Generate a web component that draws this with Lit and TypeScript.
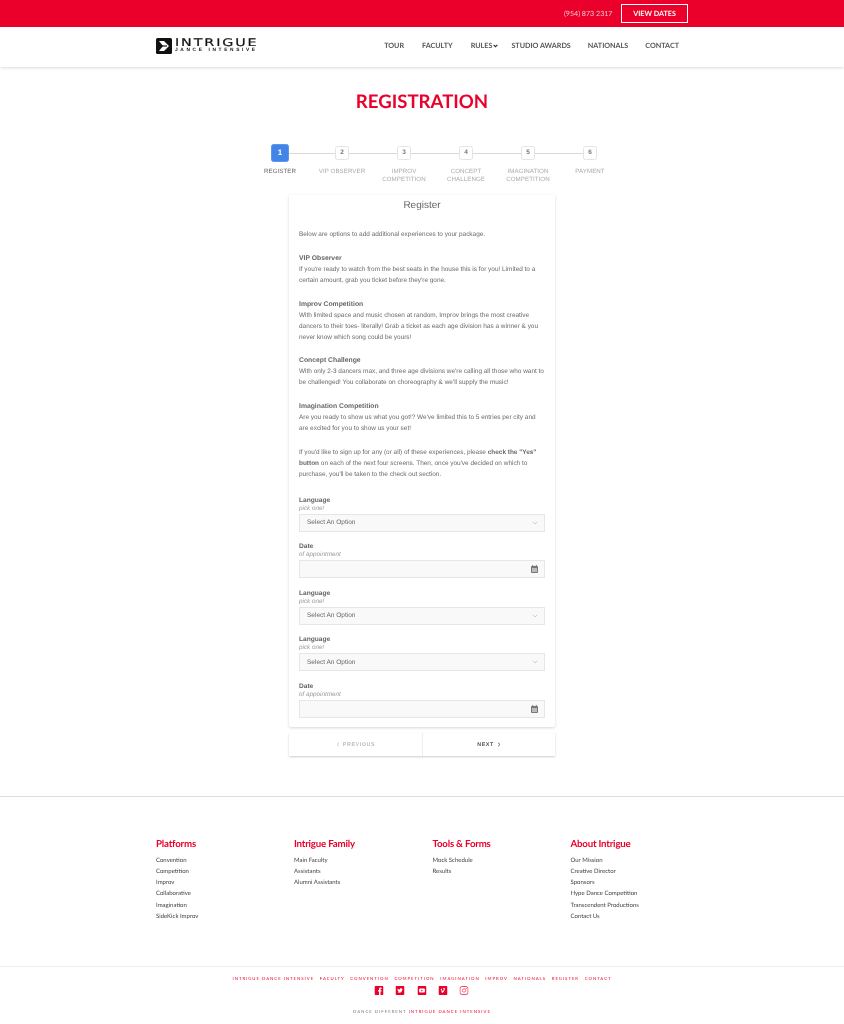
import { LitElement, html, css } from "lit";
import { customElement } from "lit/decorators.js";

const red = "#ea002a";

@customElement("app-root")
export class AppRoot extends LitElement {
  static styles = css`
    :host { display: block; width: 844px; background: #fff; font-family: "Liberation Sans", Arial, sans-serif; color: #666; overflow: hidden; text-rendering: geometricPrecision; filter: blur(.4px); }
    .topbar { height: 27px; background: #ea002a; display: flex; justify-content: flex-end; align-items: center; padding-right: 156px; gap: 8.5px; box-sizing: border-box; }
    .phone { font: 400 7.1px Lato, sans-serif; color: #f7c4cd; }
    .dates { width: 67px; height: 19px; box-sizing: border-box; border: 1px solid #fff; color: #fff; font: 700 7.2px/17px Lato, sans-serif; text-align: center; }
    .nav { height: 40px; display: flex; align-items: center; padding: 0 165px 3px 156px; box-sizing: border-box; box-shadow: 0 1px 3px rgba(0,0,0,.14); justify-content: space-between; }
    .logo { display: flex; gap: 3px; align-items: center; color: #111; }
    .logo svg { display: block; }
    .logotext { display: flex; flex-direction: column; width: 81px; }
    .l1 { font: 400 10.5px/10px "DejaVu Sans", sans-serif; letter-spacing: 1.4px; transform: scaleX(1.36); transform-origin: left; white-space: nowrap; -webkit-text-stroke: .2px #111; }
    .l2 { font: 700 4.8px/6px "Liberation Sans", sans-serif; letter-spacing: 2.65px; white-space: nowrap; }
    .links { display: flex; align-items: center; font: 700 7.2px Lato, sans-serif; color: #555; }
    .links span { display: flex; align-items: center; gap: 1px; }
    .l-tour { margin-right: 18px; } .l-fac { margin-right: 18px; } .l-rules { margin-right: 13px; } .l-stu { margin-right: 17px; } .l-nat { margin-right: 17px; }
    h1 { margin: 24px 0 0; height: 21px; text-align: center; font: 700 18.6px/21px Lato, sans-serif; color: #ea002a; }
    .steps { margin: 33px 0 0 249px; width: 372px; display: grid; grid-template-columns: repeat(6, 62px); }
    .step { display: flex; flex-direction: column; align-items: center; position: relative; height: 50px; }
    .step:not(:last-child)::after { content: ""; position: absolute; left: 31px; top: 8px; width: 62px; height: 1px; background: #d8d8d8; }
    .num { z-index: 1; margin-top: 1px; width: 14px; height: 14px; box-sizing: border-box; background: #fff; border: 1px solid #e4e4e4; border-radius: 2.5px; font: 700 6.5px/12px "Liberation Sans", sans-serif; color: #777; text-align: center; }
    .num.on { width: 18px; height: 18px; margin-top: -1px; background: #4285e9; border-color: #5d96ec; color: #fff; line-height: 16px; font-size: 8px; }
    .slabel { margin-top: 7.5px; text-align: center; font: 400 6.2px/8px "Liberation Sans", sans-serif; color: #aaa; letter-spacing: .05px; white-space: nowrap; }
    .on + .slabel { margin-top: 6px; color: #666; }
    .card { margin: 0 0 0 289px; width: 266px; box-sizing: border-box; padding: 0 10px 9px; box-shadow: 0 1px 3px rgba(0,0,0,.16); border-radius: 0 0 2px 2px; height: 532px; }
    h2 { margin: 0; padding-top: 3.5px; height: 30px; box-sizing: border-box; text-align: center; font: 400 10px/14px "Liberation Sans", sans-serif; color: #666; }
    .card p { margin: 0; font: 400 6.45px/11.2px "Liberation Sans", sans-serif; color: #6a6a6a; }
    .card .intro { padding-top: 3.5px; height: 24px; box-sizing: content-box; }
    .card h3 { margin: 0; font: 700 6.8px/11.2px "Liberation Sans", sans-serif; color: #666; }
    .s1 { height: 46px; } .s2 { height: 56px; } .s3 { height: 46px; } .s4 { height: 46px; }
    .card .note { height: 50px; }
    .field { height: 46.5px; box-sizing: border-box; }
    .flabel { font: 700 6.6px/8px "Liberation Sans", sans-serif; color: #666; }
    .fhint { font: italic 400 6.3px/8px "Liberation Sans", sans-serif; color: #999; }
    .input { height: 18px; box-sizing: border-box; border: 1px solid #e6e6e6; background: #f9f9f9; display: flex; align-items: center; justify-content: space-between; padding: 0 6px 0 7px; font: 400 6.5px "Liberation Sans", sans-serif; color: #666; margin-top: 1px; }
    .pager { margin: 6px 0 0 289px; width: 266px; height: 23px; display: grid; grid-template-columns: 134px 132px; box-shadow: 0 1px 2px rgba(0,0,0,.2); }
    .pager div { display: flex; align-items: center; justify-content: center; gap: 3px; font: 700 5.4px "Liberation Sans", sans-serif; letter-spacing: .55px; color: #555; }
    .pager .prev { color: #bbb; border-right: 1px solid #eee; }
    .foot { margin-top: 40px; border-top: 1px solid #ddd; padding: 40px 0 0 156px; height: 128px; box-sizing: border-box; display: grid; grid-template-columns: 138px 138.5px 138px 130px; }
    .foot h4 { margin: 0 0 3.5px; font: 700 9.7px/14px Lato, sans-serif; color: #ea002a; letter-spacing: -.2px; }
    .foot a { display: block; font: 400 6px/11.3px Lato, sans-serif; color: #444; }
    .bottom { margin-top: 42px; border-top: 1px solid #eee; height: 58px; padding-top: 8.5px; box-sizing: border-box; text-align: center; }
    .blinks { font: 400 4.3px/6px Lato, sans-serif; letter-spacing: .97px; color: #ea002a; display: flex; justify-content: center; gap: 5.7px; }
    .social { display: flex; justify-content: center; gap: 12.3px; margin-top: 4px; transform: translateX(-.5px); }
    .social svg { display: block; }
    .copy { margin-top: 14px; font: 400 4.3px/6px Lato, sans-serif; letter-spacing: 1px; color: #777; }
    .copy b { font-weight: 400; color: #ea002a; }
  `;

  chevron() {
    return html`<svg width="6" height="4" viewBox="0 0 6 4"><path d="M.8.8L3 3 5.2.8" fill="none" stroke="#bbb" stroke-width=".7"/></svg>`;
  }
  calendar() {
    return html`<svg width="7" height="8" viewBox="0 0 7 8"><rect x="0" y="1" width="7" height="7" rx="1" fill="#777"/><rect x="1" y="3" width="5" height="4" fill="#bbb"/><rect x="1.2" y="0" width="1" height="2" fill="#777"/><rect x="4.8" y="0" width="1" height="2" fill="#777"/></svg>`;
  }
  select() {
    return html`<div class="field"><div class="flabel">Language</div><div class="fhint">pick one!</div><div class="input"><span>Select An Option</span>${this.chevron()}</div></div>`;
  }
  date() {
    return html`<div class="field"><div class="flabel">Date</div><div class="fhint">of appointment</div><div class="input"><span></span>${this.calendar()}</div></div>`;
  }

  render() {
    const steps = [["REGISTER"],["VIP OBSERVER"],["IMPROV","COMPETITION"],["CONCEPT","CHALLENGE"],["IMAGINATION","COMPETITION"],["PAYMENT"]];
    const cols: [string, string[]][] = [
      ["Platforms", ["Convention","Competition","Improv","Collaborative","Imagination","SideKick Improv"]],
      ["Intrigue Family", ["Main Faculty","Assistants","Alumni Assistants"]],
      ["Tools & Forms", ["Mock Schedule","Results"]],
      ["About Intrigue", ["Our Mission","Creative Director","Sponsors","Hype Dance Competition","Transcendent Productions","Contact Us"]],
    ];
    const blinks = ["INTRIGUE DANCE INTENSIVE","FACULTY","CONVENTION","COMPETITION","IMAGINATION","IMPROV","NATIONALS","REGISTER","CONTACT"];
    return html`
      <div class="topbar"><span class="phone">(954) 873 2317</span><span class="dates">VIEW DATES</span></div>
      <div class="nav">
        <div class="logo">
          <svg width="16" height="16" viewBox="0 0 16 16"><rect width="16" height="16" rx="1.5" fill="#111"/><path d="M3 3h5l5 5-5 5H3l4-5z" fill="#fff"/><path d="M3 8h8" stroke="#111" stroke-width="1.2"/></svg>
          <div class="logotext"><span class="l1">INTRIGUE</span><span class="l2">JANCE INTENSIVE</span></div>
        </div>
        <div class="links">
          <span class="l-tour">TOUR</span><span class="l-fac">FACULTY</span>
          <span class="l-rules">RULES <svg width="5" height="4" viewBox="0 0 5 4"><path d="M.6.8l1.9 1.9L4.4.8" fill="none" stroke="#333" stroke-width="1.2"/></svg></span>
          <span class="l-stu">STUDIO AWARDS</span><span class="l-nat">NATIONALS</span><span>CONTACT</span>
        </div>
      </div>
      <h1>REGISTRATION</h1>
      <div class="steps">
        ${steps.map((s, i) => html`<div class="step"><div class="num ${i === 0 ? "on" : ""}">${i + 1}</div><div class="slabel">${s.map((t, j) => html`${j ? html`<br>` : ""}${t}`)}</div></div>`)}
      </div>
      <div class="card">
        <h2>Register</h2>
        <p class="intro">Below are options to add additional experiences to your package.</p>
        <div class="s1"><h3>VIP Observer</h3><p>If you're ready to watch from the best seats in the house this is for you! Limited to a certain amount, grab you ticket before they're gone.</p></div>
        <div class="s2"><h3>Improv Competition</h3><p>With limited space and music chosen at random, Improv brings the most creative dancers to their toes- literally! Grab a ticket as each age division has a winner &amp; you never know which song could be yours!</p></div>
        <div class="s3"><h3>Concept Challenge</h3><p>With only 2-3 dancers max, and three age divisions we're calling all those who want to be challenged! You collaborate on choreography &amp; we'll supply the music!</p></div>
        <div class="s4"><h3>Imagination Competition</h3><p>Are you ready to show us what you got!? We've limited this to 5 entries per city and are excited for you to show us your set!</p></div>
        <p class="note">If you'd like to sign up for any (or all) of these experiences, please <b>check the "Yes" button</b> on each of the next four screens. Then, once you've decided on which to purchase, you'll be taken to the check out section.</p>
        ${this.select()}${this.date()}${this.select()}${this.select()}${this.date()}
      </div>
      <div class="pager">
        <div class="prev"><svg width="4" height="5" viewBox="0 0 4 5"><path d="M3 .7L1 2.5 3 4.3" fill="none" stroke="#bbb" stroke-width=".7"/></svg>PREVIOUS</div>
        <div>NEXT<svg width="4" height="5" viewBox="0 0 4 5"><path d="M1 .7L3 2.5 1 4.3" fill="none" stroke="#555" stroke-width=".8"/></svg></div>
      </div>
      <div class="foot">
        ${cols.map(([t, ls]) => html`<div><h4>${t}</h4>${ls.map((l) => html`<a>${l}</a>`)}</div>`)}
      </div>
      <div class="bottom">
        <div class="blinks">${blinks.map((b) => html`<span>${b}</span>`)}</div>
        <div class="social">
          <svg width="9" height="9" viewBox="0 0 9 9"><rect width="9" height="9" rx="1" fill="${red}"/><path d="M6 9V5.5h1V4.2H6V3.5c0-.4.2-.6.6-.6H7V1.6H6C5 1.6 4.5 2.3 4.5 3.2v1h-1v1.3h1V9z" fill="#fff"/></svg>
          <svg width="9" height="9" viewBox="0 0 9 9"><rect width="9" height="9" rx="1" fill="${red}"/><path d="M1.6 6.4c2.4 1.2 5-.2 5.2-3l.6-.7-.8.2-.7-.6c-.8-.3-1.6.3-1.5 1.2-1 0-1.8-.5-2.3-1.1-.3.7 0 1.3.4 1.7l-.5-.1c0 .6.4 1 1 1.2h-.5c.2.4.5.6 1 .7-.5.4-1.2.5-1.9.5z" fill="#fff"/></svg>
          <svg width="9" height="9" viewBox="0 0 9 9"><rect width="9" height="9" rx="1" fill="${red}"/><rect x="1.6" y="2.6" width="5.8" height="3.8" rx="1" fill="#fff"/><path d="M3.8 3.5v2l1.7-1z" fill="${red}"/></svg>
          <svg width="9" height="9" viewBox="0 0 9 9"><rect width="9" height="9" rx="1" fill="${red}"/><path d="M2 3.2l.9-.7c.6 0 .8 2.6 1.3 2.6s1.3-1.6 1-2-1 0-1 .1c.5-1.5 2.3-1.6 2.2-.1C6.3 4.5 4.5 6.9 3.8 6.9 3 6.9 2.8 3.5 2.4 3.5z" fill="#fff"/></svg>
          <svg width="9" height="9" viewBox="0 0 9 9"><rect x=".5" y=".5" width="8" height="8" rx="2" fill="none" stroke="${red}" stroke-opacity=".7"/><circle cx="4.5" cy="4.5" r="1.7" fill="none" stroke="${red}" stroke-opacity=".7" stroke-width=".8"/><circle cx="6.6" cy="2.4" r=".5" fill="${red}"/></svg>
        </div>
        <div class="copy">DANCE DIFFERENT <b>INTRIGUE DANCE INTENSIVE</b></div>
      </div>
    `;
  }
}
